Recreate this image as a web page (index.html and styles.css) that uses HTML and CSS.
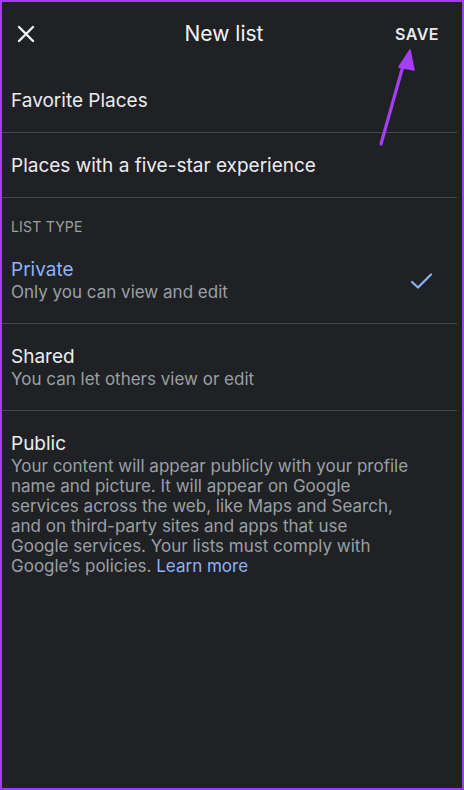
FILE: index.html
```html
<!DOCTYPE html>
<html>
<head>
<meta charset="utf-8">
<link rel="stylesheet" href="styles.css">
</head>
<body>
<div class="frame">
  <header class="topbar">
    <svg class="close" width="18" height="18" viewBox="0 0 18 18"><path d="M2 2L16 16M16 2L2 16" stroke="#f1f3f4" stroke-width="2.4" stroke-linecap="round"/></svg>
    <div class="title">New list</div>
    <div class="save">SAVE</div>
  </header>
  <div class="row field">Favorite Places</div>
  <div class="row field">Places with a five-star experience</div>
  <div class="section-label">LIST TYPE</div>
  <div class="row option">
    <div class="opt-text">
      <div class="opt-title selected">Private</div>
      <div class="opt-sub">Only you can view and edit</div>
    </div>
    <svg class="check" width="24" height="18" viewBox="0 0 24 18"><path d="M2 10L8 15.5L21 2.5" fill="none" stroke="#8ab4f8" stroke-width="2.2" stroke-linecap="round" stroke-linejoin="round"/></svg>
  </div>
  <div class="row option">
    <div class="opt-text">
      <div class="opt-title">Shared</div>
      <div class="opt-sub">You can let others view or edit</div>
    </div>
  </div>
  <div class="row option last">
    <div class="opt-text">
      <div class="opt-title">Public</div>
      <div class="opt-sub para">Your content will appear publicly with your profile name and picture. It will appear on Google services across the web, like Maps and Search, and on third-party sites and apps that use Google services. Your lists must comply with Google’s policies. <span class="link">Learn more</span></div>
    </div>
  </div>
  <svg class="arrow" width="464" height="200" viewBox="0 0 464 200"><path d="M381 144L403 66" stroke="#a53ef7" stroke-width="3.2" stroke-linecap="round"/><path d="M410 50L399 67L414 70Z" fill="#a53ef7" stroke="#a53ef7" stroke-width="1.5" stroke-linejoin="round"/></svg>
</div>
</body>
</html>
```
FILE: styles.css
```css
* { box-sizing: border-box; }
html, body { margin: 0; padding: 0; background: #202124; }
body { font-family: Inter, "Noto Sans", sans-serif; color: #e8eaed; }
.frame {
  position: relative;
  width: 464px;
  height: 790px;
  border: 2px solid #a03ff0;
  background: #202124;
  overflow: hidden;
}
.topbar {
  height: 66px;
  display: flex;
  align-items: center;
  padding: 0 24px 0 15px;
  position: relative;
}
.close { display: block; margin-top: -3px; }
.title {
  position: absolute;
  left: 0; right: 16px;
  text-align: center;
  font-size: 21px;
  color: #f1f3f4;
  margin-top: -3px;
  pointer-events: none;
}
.save {
  margin-left: auto;
  margin-right: -1px;
  font-size: 16px;
  font-weight: 600;
  letter-spacing: 0.5px;
  color: #e8eaed;
  margin-top: -3px;
}
.row {
  margin-right: 5px;
  border-bottom: 1px solid #45474a;
}
.field {
  height: 65px;
  display: flex;
  align-items: center;
  padding-left: 9px;
  font-size: 19px;
  color: #ececef;
}
.section-label {
  padding: 20px 0 0 9px;
  height: 39px;
  font-size: 14px;
  line-height: 17px;
  color: #9aa0a6;
  letter-spacing: 0.2px;
}
.option {
  display: flex;
  align-items: center;
  padding: 21px 0 20px 9px;
  min-height: 87px;
}
.option.last { border-bottom: none; }
.opt-text { flex: 1; }
.opt-title {
  font-size: 19px;
  line-height: 23px;
  color: #eceef0;
}
.opt-title.selected { color: #8ab4f8; }
.opt-sub {
  font-size: 17px;
  line-height: 22px;
  color: #9aa0a6;
}
.para { line-height: 20px; margin-top: 1px; max-width: 398px; }
.link { color: #8ab4f8; }
.check { margin-right: 23px; }
.arrow { position: absolute; left: -2px; top: -2px; pointer-events: none; }
```
